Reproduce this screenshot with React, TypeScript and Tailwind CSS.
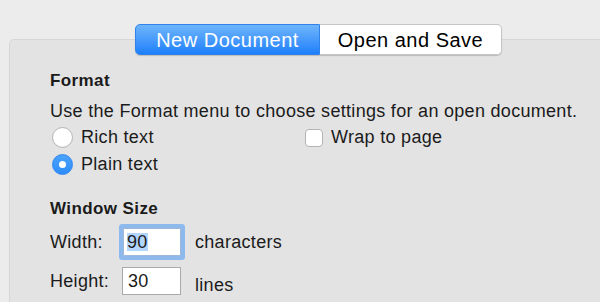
import React from "react";

function Radio({ checked, label }: { checked?: boolean; label: string }) {
  return (
    <div className="flex h-[21px] items-center">
      {checked ? (
        <div className="flex h-[21px] w-[21px] items-center justify-center rounded-full border border-[#2f86ef] bg-gradient-to-b from-[#4aa3fd] to-[#2d8cf9]">
          <div className="h-[7px] w-[7px] rounded-full bg-white" />
        </div>
      ) : (
        <div className="h-[21px] w-[21px] rounded-full border border-[#b4b4b4] bg-white shadow-[inset_0_-1px_1px_rgba(0,0,0,0.05)]" />
      )}
      <span className="ml-[8px] leading-[21px]">{label}</span>
    </div>
  );
}

export default function App() {
  return (
    <div
      className="h-[302px] w-[600px] overflow-hidden bg-[#ececec] pt-[24px] text-[18px] tracking-[0.3px] text-[#1b1b1b]"
      style={{ fontFamily: '"Liberation Sans", Arial, sans-serif' }}
    >
      {/* segmented control */}
      <div className="relative z-10 ml-[135px] flex h-[31px] w-[367px] rounded-[5px] text-[20px] tracking-[0.5px] shadow-[0_1px_1px_rgba(0,0,0,0.18)]">
        <div className="flex w-[185px] items-center justify-center rounded-l-[5px] border border-[#3183ec] bg-gradient-to-b from-[#6db4fb] to-[#1b7ffb] text-white">
          New Document
        </div>
        <div className="flex flex-1 items-center justify-center rounded-r-[5px] border border-l-0 border-[#c4c4c4] bg-white text-black">
          Open and Save
        </div>
      </div>

      {/* panel */}
      <div className="-mt-[16px] ml-[9px] h-[300px] w-[640px] rounded-[5px] border border-[#d6d6d6] bg-[#e3e3e3] pl-[40px] pt-[31px]">
        <div className="text-[17px] font-bold leading-[20px] tracking-[0.4px]">Format</div>
        <div className="mt-[10px] leading-[20px]">
          Use the Format menu to choose settings for an open document.
        </div>

        <div className="mt-[6px] flex">
          <div className="ml-[2px] flex w-[253px] flex-col gap-[6px]">
            <Radio label="Rich text" />
            <Radio checked label="Plain text" />
          </div>
          <div className="flex h-[21px] items-center">
            <div className="h-[18px] w-[18px] rounded-[4px] border border-[#b4b4b4] bg-white" />
            <span className="ml-[8px] leading-[21px]">Wrap to page</span>
          </div>
        </div>

        <div className="mt-[24px] text-[17px] font-bold leading-[20px] tracking-[0.4px]">Window Size</div>

        <div className="mt-[9px] flex items-center">
          <span className="w-[73px] leading-[20px]">Width:</span>
          <div className="flex h-[28px] w-[58px] items-center rounded-[1px] border border-[#9fb8d8] bg-white pl-[3px] shadow-[0_0_0_4px_#8db9ec]">
            <span className="bg-[#b4d5fe] leading-[18px]">90</span>
          </div>
          <span className="ml-[14px] leading-[20px]">characters</span>
        </div>

        <div className="mt-[11px] flex items-center">
          <span className="w-[72px] leading-[20px]">Height:</span>
          <div className="flex h-[28px] w-[59px] items-center border border-[#a9a9a9] bg-white pl-[5px]">
            <span className="leading-[18px]">30</span>
          </div>
          <span className="ml-[14px] pt-[8px] leading-[20px]">lines</span>
        </div>
      </div>
    </div>
  );
}
